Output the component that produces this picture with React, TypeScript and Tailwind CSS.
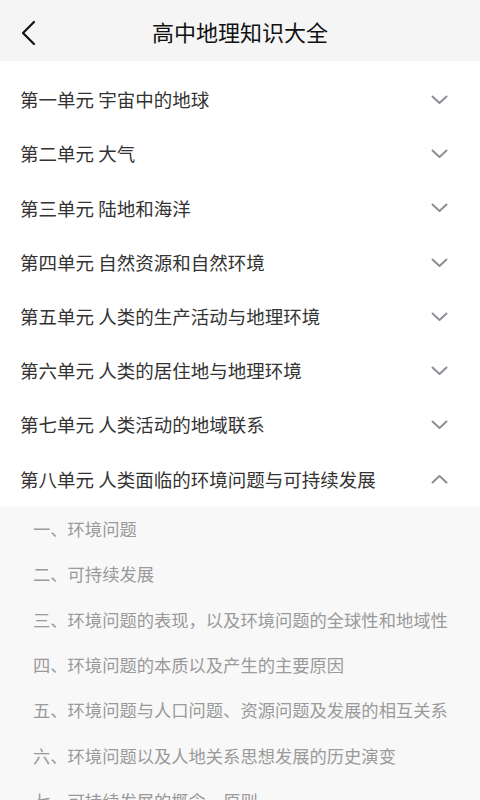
import { useState } from "react";

const units = [
  { title: "第一单元 宇宙中的地球", items: [] as string[] },
  { title: "第二单元 大气", items: [] as string[] },
  { title: "第三单元 陆地和海洋", items: [] as string[] },
  { title: "第四单元 自然资源和自然环境", items: [] as string[] },
  { title: "第五单元 人类的生产活动与地理环境", items: [] as string[] },
  { title: "第六单元 人类的居住地与地理环境", items: [] as string[] },
  { title: "第七单元 人类活动的地域联系", items: [] as string[] },
  {
    title: "第八单元 人类面临的环境问题与可持续发展",
    items: [
      "一、环境问题",
      "二、可持续发展",
      "三、环境问题的表现，以及环境问题的全球性和地域性",
      "四、环境问题的本质以及产生的主要原因",
      "五、环境问题与人口问题、资源问题及发展的相互关系",
      "六、环境问题以及人地关系思想发展的历史演变",
      "七、可持续发展的概念、原则",
    ],
  },
];

function Chevron({ up }: { up: boolean }) {
  return (
    <svg width="17" height="10" viewBox="0 0 17 10" fill="none">
      <path
        d={up ? "M1.5 8.5 L8.5 2 L15.5 8.5" : "M1.5 1.5 L8.5 8 L15.5 1.5"}
        stroke="#8e8e96"
        strokeWidth="2"
        strokeLinecap="round"
        strokeLinejoin="round"
      />
    </svg>
  );
}

export default function App() {
  const [open, setOpen] = useState<number>(7);

  return (
    <div
      className="h-[800px] overflow-hidden bg-white"
      style={{ fontFamily: '"Noto Sans CJK SC", "Noto Sans", sans-serif' }}
    >
      <div className="relative flex h-[61px] items-center justify-center bg-[#f5f5f5]">
        <button className="absolute left-[20px] top-[20px] p-0">
          <svg width="16" height="26" viewBox="0 0 16 26" fill="none">
            <path
              d="M14 2 L3 13 L14 24"
              stroke="#111"
              strokeWidth="2.2"
              strokeLinecap="round"
              strokeLinejoin="round"
            />
          </svg>
        </button>
        <h1 className="text-[22px] leading-none text-[#111]">高中地理知识大全</h1>
      </div>

      <div className="pt-3">
        {units.map((unit, i) => (
          <div key={unit.title}>
            <div
              className="flex h-[54.2px] cursor-pointer items-center justify-between pl-5 pr-[32px]"
              onClick={() => setOpen(open === i ? -1 : i)}
            >
              <span className="text-[18.5px] text-[#333]">{unit.title}</span>
              <Chevron up={open === i} />
            </div>
            {open === i && (
              <div className="bg-[#f8f8f8]">
                {unit.items.map((item) => (
                  <div
                    key={item}
                    className="flex h-[45.3px] items-center pl-[33px] text-[17.3px] text-[#9a9a9a]"
                  >
                    {item}
                  </div>
                ))}
              </div>
            )}
          </div>
        ))}
      </div>
    </div>
  );
}
